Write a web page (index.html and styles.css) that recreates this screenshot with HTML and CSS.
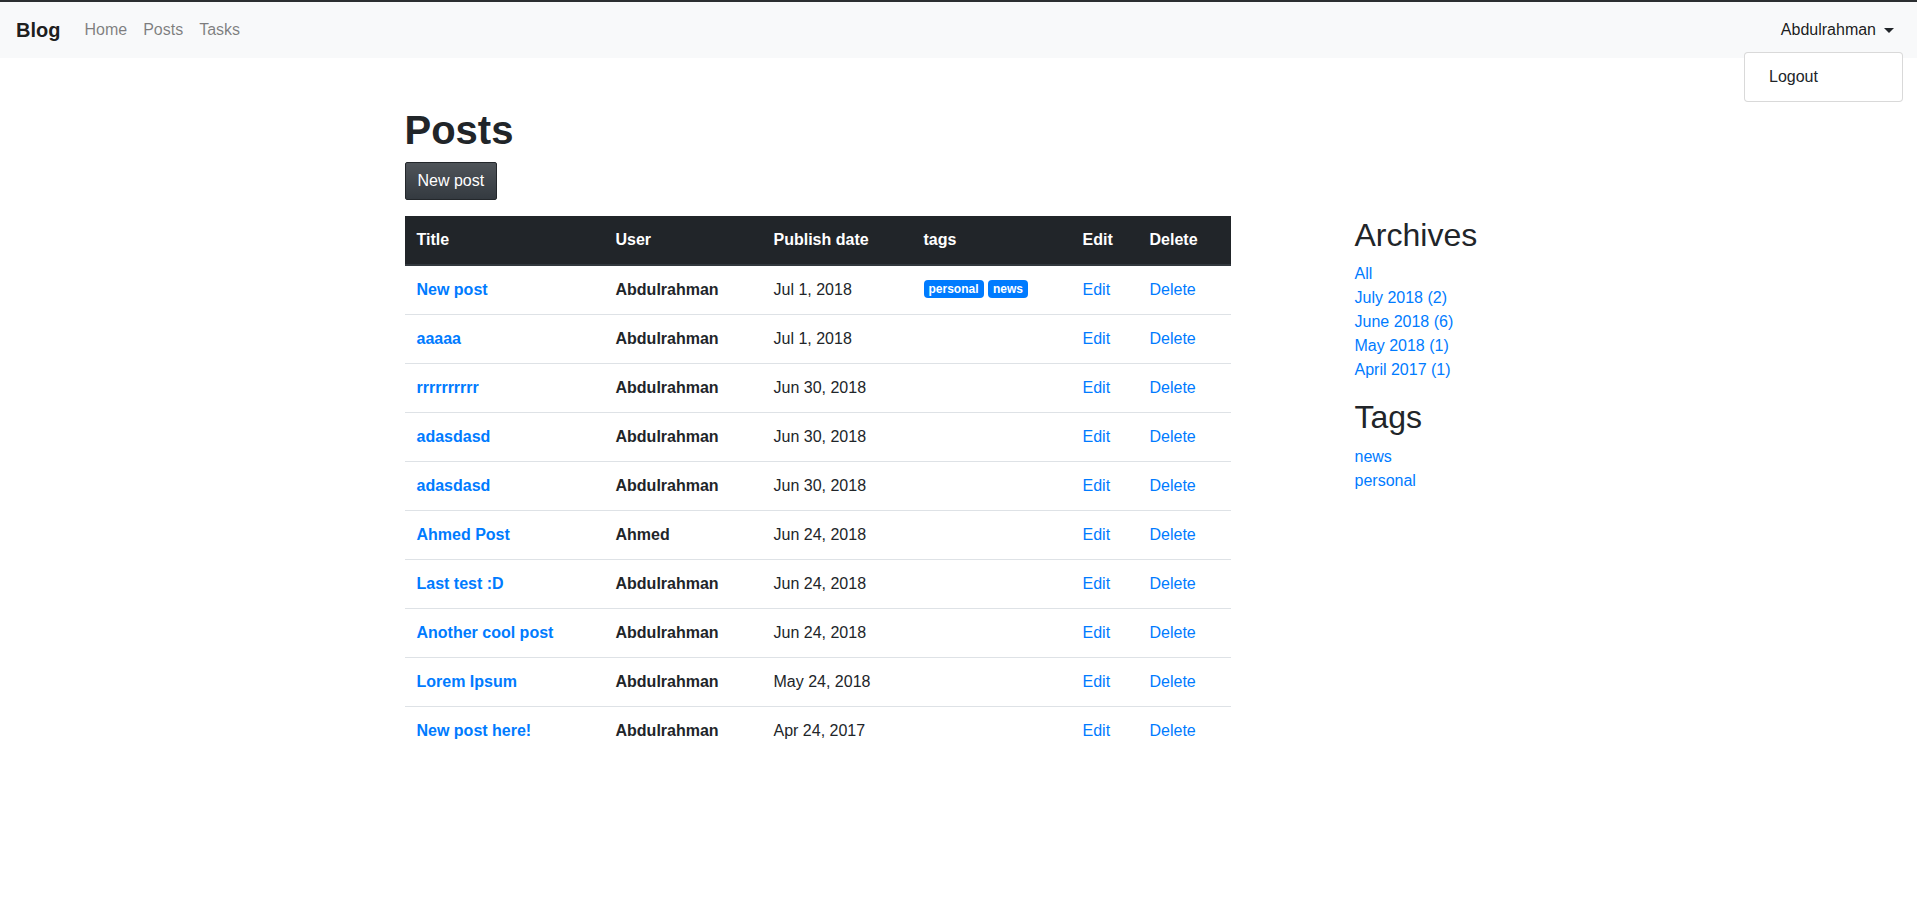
FILE: index.html
```html
<!DOCTYPE html>
<html lang="en">
<head>
<meta charset="utf-8">
<title>Blog</title>
<link rel="stylesheet" href="styles.css">
</head>
<body>
<div class="topline"></div>
<nav class="navbar">
  <a class="brand" href="#">Blog</a>
  <ul class="nav">
    <li><a class="nav-link" href="#">Home</a></li>
    <li><a class="nav-link" href="#">Posts</a></li>
    <li><a class="nav-link" href="#">Tasks</a></li>
  </ul>
  <div class="user">
    <a class="nav-link user-link" href="#">Abdulrahman<span class="caret"></span></a>
    <div class="dropdown-menu">
      <a class="dropdown-item" href="#">Logout</a>
    </div>
  </div>
</nav>

<div class="container">
  <h1 class="page-title">Posts</h1>
  <a class="btn-dark" href="#">New post</a>
  <div class="row">
    <main class="main">
      <table class="table">
        <colgroup>
          <col class="c-title"><col class="c-user"><col class="c-date"><col class="c-tags"><col class="c-edit"><col class="c-del">
        </colgroup>
        <thead>
          <tr><th>Title</th><th>User</th><th>Publish date</th><th>tags</th><th>Edit</th><th>Delete</th></tr>
        </thead>
        <tbody>
          <tr><td><a class="title-link" href="#">New post</a></td><td class="user-cell">Abdulrahman</td><td>Jul 1, 2018</td><td><span class="badge">personal</span> <span class="badge">news</span></td><td><a href="#">Edit</a></td><td><a href="#">Delete</a></td></tr>
          <tr><td><a class="title-link" href="#">aaaaa</a></td><td class="user-cell">Abdulrahman</td><td>Jul 1, 2018</td><td></td><td><a href="#">Edit</a></td><td><a href="#">Delete</a></td></tr>
          <tr><td><a class="title-link" href="#">rrrrrrrrrr</a></td><td class="user-cell">Abdulrahman</td><td>Jun 30, 2018</td><td></td><td><a href="#">Edit</a></td><td><a href="#">Delete</a></td></tr>
          <tr><td><a class="title-link" href="#">adasdasd</a></td><td class="user-cell">Abdulrahman</td><td>Jun 30, 2018</td><td></td><td><a href="#">Edit</a></td><td><a href="#">Delete</a></td></tr>
          <tr><td><a class="title-link" href="#">adasdasd</a></td><td class="user-cell">Abdulrahman</td><td>Jun 30, 2018</td><td></td><td><a href="#">Edit</a></td><td><a href="#">Delete</a></td></tr>
          <tr><td><a class="title-link" href="#">Ahmed Post</a></td><td class="user-cell">Ahmed</td><td>Jun 24, 2018</td><td></td><td><a href="#">Edit</a></td><td><a href="#">Delete</a></td></tr>
          <tr><td><a class="title-link" href="#">Last test :D</a></td><td class="user-cell">Abdulrahman</td><td>Jun 24, 2018</td><td></td><td><a href="#">Edit</a></td><td><a href="#">Delete</a></td></tr>
          <tr><td><a class="title-link" href="#">Another cool post</a></td><td class="user-cell">Abdulrahman</td><td>Jun 24, 2018</td><td></td><td><a href="#">Edit</a></td><td><a href="#">Delete</a></td></tr>
          <tr><td><a class="title-link" href="#">Lorem Ipsum</a></td><td class="user-cell">Abdulrahman</td><td>May 24, 2018</td><td></td><td><a href="#">Edit</a></td><td><a href="#">Delete</a></td></tr>
          <tr><td><a class="title-link" href="#">New post here!</a></td><td class="user-cell">Abdulrahman</td><td>Apr 24, 2017</td><td></td><td><a href="#">Edit</a></td><td><a href="#">Delete</a></td></tr>
        </tbody>
      </table>
    </main>
    <aside class="sidebar">
      <h2 class="side-title">Archives</h2>
      <ol class="side-list">
        <li><a href="#">All</a></li>
        <li><a href="#">July 2018 (2)</a></li>
        <li><a href="#">June 2018 (6)</a></li>
        <li><a href="#">May 2018 (1)</a></li>
        <li><a href="#">April 2017 (1)</a></li>
      </ol>
      <h2 class="side-title">Tags</h2>
      <ol class="side-list">
        <li><a href="#">news</a></li>
        <li><a href="#">personal</a></li>
      </ol>
    </aside>
  </div>
</div>
</body>
</html>
```

FILE: styles.css
```css
* { box-sizing: border-box; }
html, body { margin: 0; padding: 0; }
body {
  font-family: "Liberation Sans", Arial, Helvetica, sans-serif;
  font-size: 16px;
  line-height: 1.5;
  color: #212529;
  background: #fff;
}
a { color: #007bff; text-decoration: none; }

.topline { height: 2px; background: #2b2e31; }

.navbar {
  position: relative;
  display: flex;
  align-items: center;
  background: #f8f9fa;
  padding: 8px 16px;
  height: 56px;
}
.brand {
  font-size: 20px;
  font-weight: bold;
  color: rgba(0,0,0,.9);
  line-height: 30px;
  padding: 5px 0;
  margin-right: 16px;
}
.nav { display: flex; list-style: none; margin: 0; padding: 0; }
.nav-link {
  display: block;
  padding: 8px;
  line-height: 24px;
  color: rgba(0,0,0,.5);
}
.user { margin-left: auto; position: relative; }
.user-link { color: rgba(0,0,0,.9); display: flex; align-items: center; padding-right: 7px; }
.caret {
  display: inline-block;
  margin-left: 8px;
  width: 0; height: 0;
  border-top: 5px solid #212529;
  border-left: 5px solid transparent;
  border-right: 5px solid transparent;
}
.dropdown-menu {
  position: absolute;
  top: 42px;
  right: -2px;
  width: 159px;
  background: #fff;
  border: 1px solid rgba(0,0,0,.15);
  border-radius: 4px;
  padding: 8px 0;
  z-index: 10;
}
.dropdown-item {
  display: block;
  padding: 4px 24px;
  line-height: 24px;
  color: #212529;
}

.container {
  width: 1140px;
  margin: 48px auto 0;
  padding: 0 14px 0 16px;
}
.page-title {
  font-size: 40px;
  font-weight: bold;
  line-height: 1.2;
  margin: 0 0 8px;
}
.btn-dark {
  display: inline-block;
  color: #fff;
  background: linear-gradient(#4f5459, #343a40);
  border: 1px solid #23272b;
  border-radius: 2px;
  padding: 6px 12px;
  line-height: 24px;
  font-size: 16px;
  margin-bottom: 16px;
}
.row { display: flex; align-items: flex-start; }
.main { width: 826px; flex: none; }
.sidebar { margin-left: 124px; flex: 1; }

.table {
  width: 100%;
  border-collapse: collapse;
  table-layout: fixed;
}
.c-title { width: 199px; }
.c-user { width: 158px; }
.c-date { width: 150px; }
.c-tags { width: 159px; }
.c-edit { width: 67px; }
.c-del { width: 93px; }
.table th {
  background: #212529;
  color: #fff;
  text-align: left;
  font-weight: bold;
  padding: 12px;
  line-height: 24px;
  border-bottom: 2px solid #32383e;
  white-space: nowrap;
}
.table td {
  padding: 12px;
  line-height: 24px;
  border-top: 1px solid #dee2e6;
  white-space: nowrap;
}
.table tbody tr:first-child td { border-top: 0; }
.title-link { font-weight: bold; }
.user-cell { font-weight: bold; }
.badge {
  display: inline-block;
  font-size: 12px;
  font-weight: bold;
  line-height: 1;
  color: #fff;
  background: #007bff;
  padding: 3px 5px;
  border-radius: 4px;
  vertical-align: 2px;
}

.side-title {
  font-size: 32px;
  font-weight: normal;
  line-height: 1.2;
  margin: 0 0 8px;
}
.side-list {
  list-style: none;
  margin: 0 0 16px;
  padding: 0;
}
.side-list li { line-height: 24px; }
```
